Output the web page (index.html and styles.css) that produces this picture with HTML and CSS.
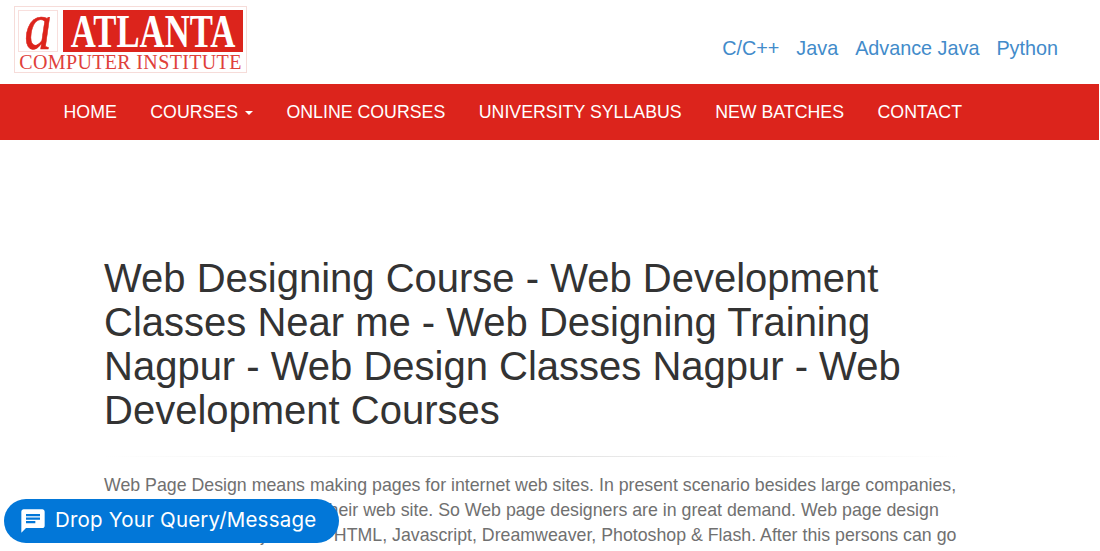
FILE: index.html
```html
<!DOCTYPE html>
<html lang="en">
<head>
    <meta charset="UTF-8">
    <meta name="viewport" content="width=device-width, initial-scale=1.0">
    <title>Web Designing Course - Atlanta Computer Institute</title>
    <link rel="stylesheet" href="styles.css">
</head>
<body>
<header class="top-bar">
    <a class="logo" href="#">
        <div class="logo-row">
            <span class="logo-mark"><span class="logo-a">a</span></span>
            <span class="logo-name"><span class="logo-word">ATLANTA</span></span>
        </div>
        <div class="logo-sub">COMPUTER INSTITUTE</div>
    </a>
    <nav class="top-links">
        <a href="#">C/C++</a>
        <a href="#">Java</a>
        <a href="#">Advance Java</a>
        <a href="#">Python</a>
    </nav>
</header>

<nav class="main-nav">
    <a href="#">HOME</a>
    <a href="#">COURSES <span class="caret"></span></a>
    <a href="#">ONLINE COURSES</a>
    <a href="#">UNIVERSITY SYLLABUS</a>
    <a href="#">NEW BATCHES</a>
    <a href="#">CONTACT</a>
</nav>

<main class="content">
    <h1>Web Designing Course - Web Development Classes Near me - Web Designing Training Nagpur - Web Design Classes Nagpur - Web Development Courses</h1>
    <hr class="divider">
    <p>Web Page Design means making pages for internet web sites. In present scenario besides large companies, small offices too are having their web site. So Web page designers are in great demand. Web page design course includes subjects like HTML, Javascript, Dreamweaver, Photoshop &amp; Flash. After this persons can go</p>
</main>

<a class="query-btn" href="#">
    <svg class="query-icon" viewBox="0 0 24 24" width="28" height="28">
        <path fill="#fff" d="M20 2H4c-1.1 0-2 .9-2 2v18l4-4h14c1.100 0 2-.9 2-2V4c0-1.100-.9-2-2-2zM6 9h12v2H6V9zm8 5H6v-2h8v2zm4-6H6V6h12v2z"/>
    </svg>
    <span class="query-text">Drop Your Query/Message</span>
</a>
</body>
</html>
```

FILE: styles.css
```css
html, body {
    height: 100%;
    overflow: hidden;
}

body {
    margin: 0;
    background-color: #fff;
    font-family: "Liberation Sans", Arial, sans-serif;
    color: #333;
}

a {
    text-decoration: none;
}

.top-bar {
    display: flex;
    justify-content: space-between;
    height: 84px;
    padding: 6px 42px 0 14px;
    box-sizing: border-box;
}

.logo {
    display: block;
    width: 233px;
    height: 67px;
    box-sizing: border-box;
    padding: 3px 3px 0 3px;
    border: 1px solid #f6dcd9;
}

.logo-row {
    display: flex;
    gap: 5px;
    height: 42px;
}

.logo-mark {
    width: 40px;
    height: 42px;
    box-sizing: border-box;
    border: 1px solid #f8dfdd;
    font-family: "Liberation Serif", serif;
    font-style: italic;
    font-size: 68px;
    line-height: 30px;
    text-align: center;
    color: #dc241c;
}

.logo-a {
    display: inline-block;
    transform: scaleX(0.8);
    -webkit-text-stroke: 0.6px #dc241c;
}

.logo-name {
    flex: 1;
    height: 42px;
    background-color: #dc241c;
    text-align: center;
}

.logo-word {
    display: inline-block;
    margin: 0 -30px;
    color: #fff;
    font-family: "Liberation Serif", serif;
    font-weight: 700;
    font-size: 46px;
    line-height: 43px;
    white-space: nowrap;
    transform: scaleX(0.755);
}

.logo-sub {
    margin-top: 1px;
    font-family: "Liberation Serif", serif;
    font-size: 20px;
    line-height: 18px;
    letter-spacing: 0.35px;
    text-align: center;
    color: #e0403a;
    white-space: nowrap;
}

.top-links {
    display: flex;
    gap: 17px;
    padding-top: 30px;
    font-size: 19.8px;
    line-height: 24px;
}

.top-links a {
    color: #428bca;
}

.main-nav {
    display: flex;
    gap: 33.5px;
    height: 56px;
    margin-right: 1px;
    padding-left: 63.5px;
    background-color: #dc241c;
    font-size: 17.75px;
    line-height: 56px;
}

.main-nav a {
    color: #fff;
    white-space: nowrap;
}

.caret {
    display: inline-block;
    margin-left: 2px;
    vertical-align: middle;
    border-top: 4px solid #fff;
    border-left: 4px solid transparent;
    border-right: 4px solid transparent;
}

.content {
    width: 856px;
    padding: 116px 0 0 104px;
}

h1 {
    margin: 0;
    font-size: 40px;
    font-weight: 400;
    line-height: 44px;
}

.divider {
    height: 1px;
    margin: 24px 0 16px;
    border: 0;
    background-image: linear-gradient(to right, #fff, #e2e2e2, #fff);
}

p {
    margin: 0;
    font-size: 17.75px;
    line-height: 25px;
    color: #707070;
}

.query-btn {
    position: fixed;
    left: 4px;
    bottom: 8px;
    display: flex;
    align-items: center;
    gap: 8px;
    width: 335px;
    height: 44px;
    box-sizing: border-box;
    padding-left: 15px;
    border-radius: 22px;
    background-color: #0277d8;
    color: #fff;
    font-family: "Inter", sans-serif;
    font-size: 20.5px;
    letter-spacing: 0.2px;
}

.query-text {
    margin-bottom: 3px;
}
```
